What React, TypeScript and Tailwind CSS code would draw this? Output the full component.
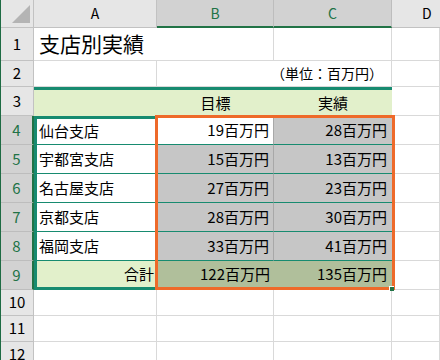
import React from "react";

// 支店別実績 — Excel風のシート。B4:C9 が選択中（オレンジ枠で強調）。

const font = { fontFamily: '"Noto Sans CJK JP", "Noto Sans", sans-serif' };

type Row = { name: string; target: string; actual: string };

const rows: Row[] = [
  { name: "仙台支店", target: "19百万円", actual: "28百万円" },
  { name: "宇都宮支店", target: "15百万円", actual: "13百万円" },
  { name: "名古屋支店", target: "27百万円", actual: "23百万円" },
  { name: "京都支店", target: "28百万円", actual: "30百万円" },
  { name: "福岡支店", target: "33百万円", actual: "41百万円" },
];

function RowHead({ n, sel }: { n: number; sel?: boolean }) {
  return (
    <div
      className={
        sel
          ? "flex items-center justify-center border-b border-r-2 border-b-[#bdbdbd] border-r-[#217346] bg-[#d2d2d2] text-[15px] text-[#217346]"
          : "flex items-center justify-center border-b border-r border-[#c2c2c2] bg-[#e6e6e6] text-[15px] text-black"
      }
    >
      {n}
    </div>
  );
}

function Blank() {
  return <div className="border-b border-r border-[#d9d9d9] bg-white" />;
}

export default function App() {
  return (
    <div
      className="relative h-[360px] w-[440px] overflow-hidden border-l border-[#1e6b43] bg-white text-black"
      style={font}
    >
      <div className="grid grid-cols-[33px_123px_117px_118px_1fr] grid-rows-[28px_33px_26px_29px_29px_29px_29px_29px_29px_29px_26px_26px_26px]">
        {/* 列見出し */}
        <div className="relative border-b border-r border-[#c2c2c2] bg-[#e6e6e6]">
          <div className="absolute bottom-[4px] right-[3px] h-0 w-0 border-b-[18px] border-l-[18px] border-b-[#b4b4b4] border-l-transparent" />
        </div>
        <div className="flex items-center justify-center border-b border-r border-[#c2c2c2] bg-[#e6e6e6] text-[14px]">
          A
        </div>
        <div className="flex items-center justify-center border-b-2 border-r border-b-[#217346] border-r-[#bdbdbd] bg-[#d2d2d2] text-[14px] text-[#217346]">
          B
        </div>
        <div className="flex items-center justify-center border-b-2 border-r border-b-[#217346] border-r-[#bdbdbd] bg-[#d2d2d2] text-[14px] text-[#217346]">
          C
        </div>
        <div className="flex items-center justify-start border-b border-[#c2c2c2] bg-[#e6e6e6] pl-[30px] text-[14px]">
          D
        </div>

        {/* 1行目：タイトル */}
        <RowHead n={1} />
        <div className="flex items-center whitespace-nowrap border-b border-[#d9d9d9] pl-[5px] text-[21px]">
          支店別実績
        </div>
        <div className="border-b border-r border-[#d9d9d9]" />
        <Blank />
        <Blank />

        {/* 2行目：単位 */}
        <RowHead n={2} />
        <Blank />
        <div className="border-b border-[#d9d9d9]" />
        <div className="flex items-center justify-end whitespace-nowrap border-b border-r border-[#d9d9d9] pr-[8px] text-[14px]">
          （単位：百万円）
        </div>
        <Blank />

        {/* 3行目：見出し */}
        <RowHead n={3} />
        <div className="border-t-[3px] border-[#178b70] bg-[#e2f0cb]" />
        <div className="flex items-center justify-center border-t-[3px] border-[#178b70] bg-[#e2f0cb] text-[15px]">
          目標
        </div>
        <div className="flex items-center justify-center border-t-[3px] border-[#178b70] bg-[#e2f0cb] text-[15px]">
          実績
        </div>
        <Blank />

        {/* 4〜8行目：支店 */}
        {rows.map((r, i) => (
          <React.Fragment key={r.name}>
            <RowHead n={i + 4} sel />
            <div
              className={
                i === 0
                  ? "flex items-center border-l-[3px] border-t-[3px] border-b border-[#178b70] bg-white pl-[2px] text-[15px]"
                  : "flex items-center border-l-[3px] border-b border-[#178b70] bg-white pl-[2px] text-[15px]"
              }
            >
              {r.name}
            </div>
            <div
              className={
                i === 0
                  ? "flex items-center justify-end border-b border-r border-b-[#178b70] border-r-[#a8a8a8] bg-white pr-[4px] text-[15px]"
                  : "flex items-center justify-end border-b border-r border-b-[#178b70] border-r-[#a8a8a8] bg-[#c6c6c6] pr-[4px] text-[15px]"
              }
            >
              {r.target}
            </div>
            <div className="flex items-center justify-end border-b border-[#178b70] bg-[#c6c6c6] pr-[5px] text-[15px]">
              {r.actual}
            </div>
            <Blank />
          </React.Fragment>
        ))}

        {/* 9行目：合計 */}
        <RowHead n={9} sel />
        <div className="flex items-center justify-end border-b-[3px] border-l-[3px] border-[#178b70] bg-[#e2f0cb] pr-[3px] text-[15px]">
          合計
        </div>
        <div className="flex items-center justify-end border-b-[3px] border-[#178b70] bg-[#b0bf9b] pr-[4px] text-[15px]">
          122百万円
        </div>
        <div className="flex items-center justify-end border-b-[3px] border-[#178b70] bg-[#b0bf9b] pr-[5px] text-[15px]">
          135百万円
        </div>
        <Blank />

        {/* 10〜12行目：空行 */}
        {[10, 11, 12].map((n) => (
          <React.Fragment key={n}>
            <RowHead n={n} />
            <Blank />
            <Blank />
            <Blank />
            <Blank />
          </React.Fragment>
        ))}
      </div>

      {/* 強調の枠（B4:C9） */}
      <div className="pointer-events-none absolute left-[154px] top-[115px] h-[175px] w-[240px] border-[3px] border-[#ee6a2a]" />
      <div className="pointer-events-none absolute left-[388px] top-[286px] h-[5px] w-[5px] border-l border-t border-white bg-[#217346]" />
    </div>
  );
}
